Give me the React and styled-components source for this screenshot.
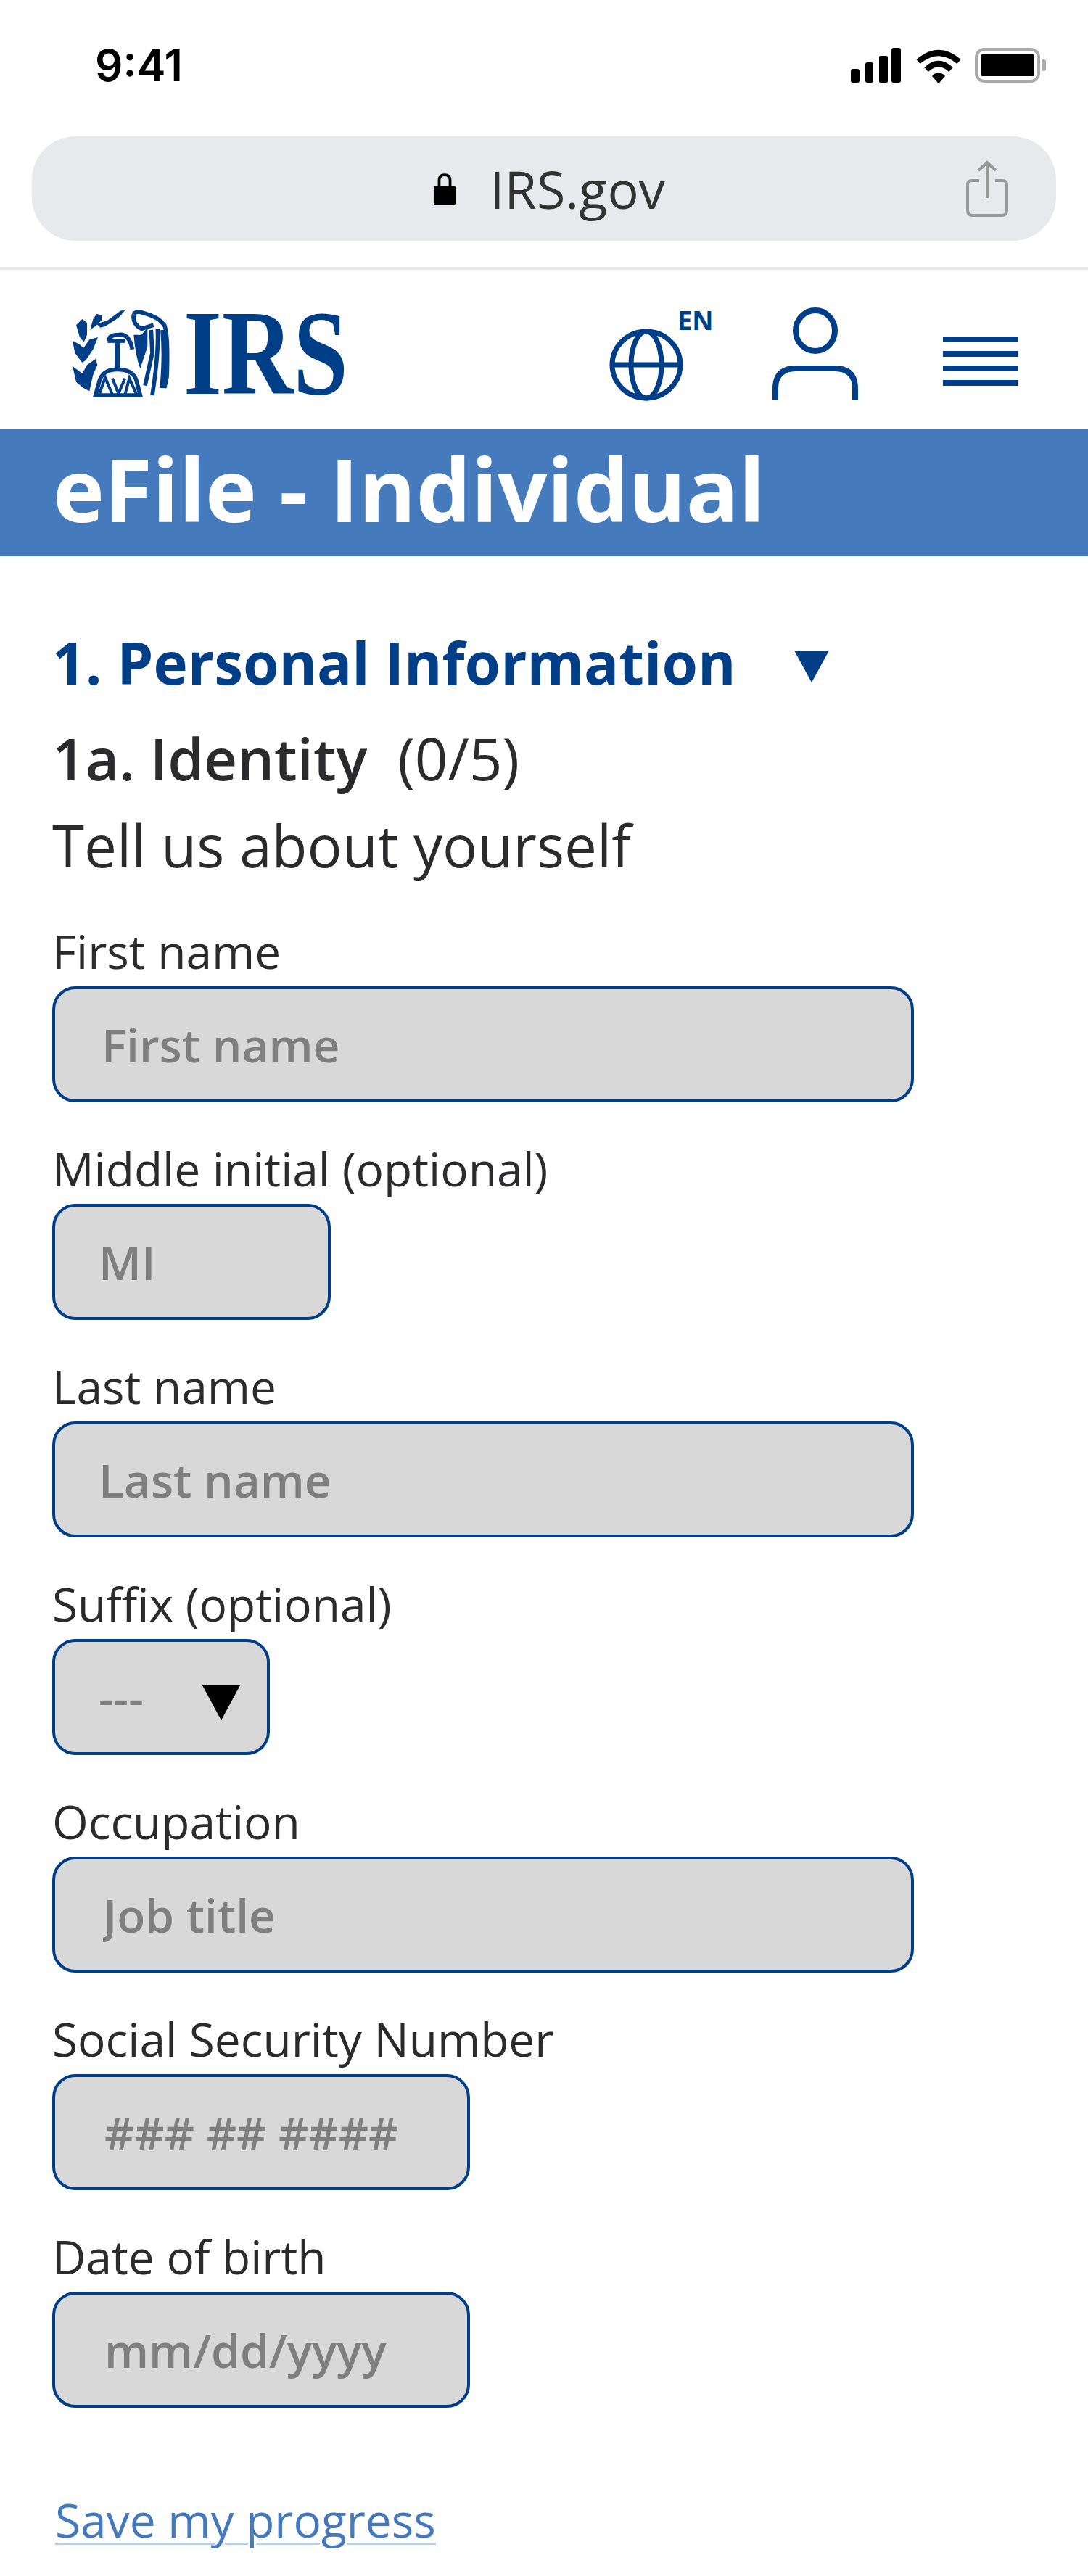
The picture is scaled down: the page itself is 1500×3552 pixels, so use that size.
import React from 'react'
import styled, { createGlobalStyle } from 'styled-components'

const NAVY = '#003f87'

const GlobalStyle = createGlobalStyle`
    html, body {
        margin: 0;
        padding: 0;
        background: #ffffff;
    }
    * {
        box-sizing: border-box;
    }
`

const Page = styled.div`
    width: 1500px;
    height: 3552px;
    overflow: hidden;
    font-family: "Open Sans", sans-serif;
    color: #2b2b2e;
`

const StatusBar = styled.div`
    height: 188px;
    display: flex;
    align-items: center;
    justify-content: space-between;
    padding: 0 57px 8px 131px;
`

const Time = styled.span`
    font-family: "Inter", sans-serif;
    font-weight: 600;
    font-size: 60px;
    color: #000000;
`

const StatusIcons = styled.div`
    display: flex;
    align-items: center;
    gap: 19px;
`

const UrlWrap = styled.div`
    padding: 0 44px 36px;
    border-bottom: 4px solid #e8e9ec;
`

const UrlBar = styled.div`
    height: 144px;
    border-radius: 60px;
    background: #e8e9ec;
    display: grid;
    grid-template-columns: 1fr auto 1fr;
    align-items: center;
    padding: 0 66px 0 80px;
`

const UrlText = styled.div`
    grid-column: 2;
    display: flex;
    align-items: center;
    gap: 46px;
    font-size: 72px;
    line-height: 100px;
    color: #333333;
`

const ShareIcon = styled.svg`
    justify-self: end;
    width: 58px;
    height: 78px;
`

const Header = styled.header`
    height: 220px;
    display: flex;
    align-items: flex-start;
    padding: 52px 96px 0 100px;
`

const Irs = styled.span`
    margin-left: 18px;
    margin-top: -33px;
    width: 224px;
    display: block;
    font-family: "Liberation Serif", serif;
    font-weight: 700;
    font-size: 168px;
    line-height: 190px;
    color: ${NAVY};
    transform: scaleX(0.81);
    transform-origin: left center;
`

const Actions = styled.div`
    margin-left: auto;
    display: flex;
    align-items: flex-start;
`

const GlobeWrap = styled.div`
    position: relative;
    width: 102px;
    height: 100px;
    margin-top: 29px;
`

const EnBadge = styled.span`
    position: absolute;
    left: 94px;
    top: -31px;
    font-size: 36px;
    line-height: 40px;
    font-weight: 700;
    color: ${NAVY};
`

const PersonIcon = styled.svg`
    width: 118px;
    height: 128px;
    margin-left: 123px;
`

const MenuButton = styled.div`
    width: 104px;
    margin-left: 117px;
    margin-top: 40px;
    display: flex;
    flex-direction: column;
    gap: 12px;
`

const MenuBar = styled.span`
    display: block;
    height: 8px;
    background: ${NAVY};
`

const Banner = styled.div`
    height: 175px;
    background: #457bbd;
    display: flex;
    align-items: center;
    padding: 0 0 12px 73px;
`

const BannerTitle = styled.h1`
    margin: 0;
    font-size: 120px;
    line-height: 150px;
    font-weight: 700;
    color: #ffffff;
`

const Main = styled.main`
    padding: 96px 0 0 72px;
`

const SectionTitle = styled.h2`
    margin: 0;
    display: flex;
    align-items: center;
    font-size: 80px;
    line-height: 100px;
    font-weight: 700;
    color: ${NAVY};
`

const Caret = styled.svg`
    width: 48px;
    height: 44px;
    margin-left: 80px;
    margin-top: 12px;
`

const SubTitle = styled.h3`
    margin: 32px 0 0;
    font-size: 80px;
    line-height: 100px;
    font-weight: 600;
`

const Count = styled.span`
    font-weight: 400;
    margin-left: 21px;
`

const Lead = styled.p`
    margin: 20px 0 0;
    font-size: 80px;
    line-height: 100px;
`

const Form = styled.form`
    margin-top: 57px;
    display: flex;
    flex-direction: column;
    gap: 52px;
`

const Field = styled.div`
    display: flex;
    flex-direction: column;
    gap: 8px;
`

const Label = styled.label`
    font-size: 64px;
    line-height: 80px;
`

const Input = styled.input`
    width: ${(p) => p.$width}px;
    height: 160px;
    padding: 0 0 0 ${(p) => p.$inset}px;
    border: 4px solid ${NAVY};
    border-radius: 32px;
    background: #d8d8d8;
    font-family: inherit;
    font-size: 64px;
    font-weight: 600;
    outline: none;
    &::placeholder {
        color: #7f7f7f;
        opacity: 1;
    }
`

const SelectBox = styled.div`
    position: relative;
    width: 300px;
`

const Select = styled.select`
    width: 100%;
    height: 160px;
    padding: 0 0 0 60px;
    border: 4px solid ${NAVY};
    border-radius: 32px;
    background: #d8d8d8;
    appearance: none;
    font-family: inherit;
    font-size: 64px;
    font-weight: 600;
    color: #7f7f7f;
    outline: none;
`

const SelectArrow = styled.svg`
    position: absolute;
    left: 207px;
    top: 64px;
    width: 52px;
    height: 48px;
`

const SaveLink = styled.a`
    display: inline-block;
    margin: 115px 0 0 4px;
    font-size: 64px;
    line-height: 80px;
    color: #4479bc;
    text-decoration: underline;
    text-decoration-thickness: 3px;
    text-decoration-color: #b9cde6;
    text-underline-offset: 7px;
`

const fields = [
    { label: 'First name', placeholder: 'First name', width: 1188, inset: 64 },
    { label: 'Middle initial (optional)', placeholder: 'MI', width: 384, inset: 60 },
    { label: 'Last name', placeholder: 'Last name', width: 1188, inset: 60 },
    { label: 'Suffix (optional)', select: true },
    { label: 'Occupation', placeholder: 'Job title', width: 1188, inset: 66 },
    { label: 'Social Security Number', placeholder: '### ## ####', width: 576, inset: 68 },
    { label: 'Date of birth', placeholder: 'mm/dd/yyyy', width: 576, inset: 68 },
]

function SignalIcon() {
    return (
        <svg width="72" height="48" viewBox="0 0 72 48" fill="#000">
            <rect x="1" y="29" width="12" height="19" rx="3" />
            <rect x="21" y="20" width="11" height="28" rx="3" />
            <rect x="40" y="11" width="12" height="37" rx="2" />
            <rect x="57" y="0" width="13" height="48" rx="3" />
        </svg>
    )
}

function WifiIcon() {
    return (
        <svg width="62" height="48" viewBox="0 0 62 48" fill="none" stroke="#000" strokeWidth="8">
            <path d="M3 19 Q31 -5 59 19" />
            <path d="M14 30 Q31 14 48 30" />
            <path d="M24 39 L31 47 L38 39 Q31 32 24 39 Z" fill="#000" strokeWidth="3" />
        </svg>
    )
}

function BatteryIcon() {
    return (
        <svg width="99" height="48" viewBox="0 0 99 48">
            <rect x="2" y="2" width="86" height="44" rx="11" fill="none" stroke="#aaaaaa" strokeWidth="4" />
            <rect x="8" y="9" width="74" height="30" rx="2" fill="#000" />
            <rect x="92" y="16" width="6" height="16" rx="3" fill="#aaaaaa" />
        </svg>
    )
}

function LockIcon() {
    return (
        <svg width="32" height="48" viewBox="0 0 34 48">
            <path d="M9 22 V12 Q9 4 17 4 Q25 4 25 12 V22" fill="none" stroke="#000" strokeWidth="4" />
            <rect x="1" y="20" width="32" height="28" rx="3" fill="#000" />
        </svg>
    )
}

function SealIcon() {
    return (
        <svg width="135" height="126" viewBox="15 12 405 378" fill={NAVY} stroke="none">
            <path d="M30 85 L55 60 L75 75 L75 125 L62 155 L45 135 Z" />
            <path d="M88 105 L100 60 L115 38 L135 45 L135 65 L115 85 Z" />
            <path d="M115 80 L160 65 L215 25 L232 25 L205 55 L150 90 L130 95 Z" />
            <path d="M15 150 L45 165 L60 180 L85 145 L120 135 L100 185 L70 230 L55 240 L25 200 Z" />
            <path d="M15 255 L35 270 L55 285 L75 250 L110 225 L118 250 L100 290 L85 358 L60 345 L30 320 Z" />
            <path d="M268 125 Q275 210 295 265 L325 175 L325 95 L300 125 Z" />
            <g fill="none" stroke={NAVY} strokeWidth="17">
                <path d="M165 150 Q165 125 205 125 Q250 118 262 185" />
                <path d="M160 150 H232" />
                <path d="M200 150 V265" strokeWidth="20" />
                <path d="M110 375 H295 L278 310 Q262 268 200 268 Q145 268 128 310 Z" />
                <path d="M125 372 L150 302 L180 372 M205 368 L180 305 M205 368 L232 305 M232 372 L250 305 L280 372" strokeWidth="12" />
                <path d="M268 40 Q275 25 310 35 Q370 50 395 85 Q412 130 405 300 L395 345" />
                <path d="M268 40 Q262 80 300 100 L350 85" />
                <path d="M340 105 L345 200 L315 335" />
                <path d="M367 100 Q372 200 345 375" />
                <path d="M387 105 Q397 220 384 345" />
            </g>
        </svg>
    )
}

function App() {
    return (
        <Page>
            <GlobalStyle />
            <StatusBar>
                <Time>9:41</Time>
                <StatusIcons>
                    <SignalIcon />
                    <WifiIcon />
                    <BatteryIcon />
                </StatusIcons>
            </StatusBar>
            <UrlWrap>
                <UrlBar>
                    <UrlText>
                        <LockIcon />
                        IRS.gov
                    </UrlText>
                    <ShareIcon viewBox="0 0 58 78" fill="none" stroke="#999999" strokeWidth="4">
                        <path d="M29 52 V3 M17 14 L29 3 L41 14" />
                        <path d="M18 28 H8 Q2 28 2 34 V69 Q2 76 9 76 H49 Q56 76 56 69 V34 Q56 28 50 28 H40" />
                    </ShareIcon>
                </UrlBar>
            </UrlWrap>
            <Header>
                <SealIcon />
                <Irs>IRS</Irs>
                <Actions>
                    <GlobeWrap>
                        <svg width="102" height="100" viewBox="0 0 102 100" fill="none" stroke={NAVY} strokeWidth="7">
                            <ellipse cx="51" cy="50" rx="47" ry="46" />
                            <ellipse cx="51" cy="50" rx="21" ry="46" />
                            <path d="M4 50 H98" />
                        </svg>
                        <EnBadge>EN</EnBadge>
                    </GlobeWrap>
                    <PersonIcon viewBox="0 0 118 128" fill="none" stroke={NAVY} strokeWidth="8">
                        <ellipse cx="59" cy="32" rx="27" ry="28" />
                        <path d="M4 128 V112 Q4 84 32 84 H86 Q114 84 114 112 V128" />
                    </PersonIcon>
                    <MenuButton>
                        <MenuBar />
                        <MenuBar />
                        <MenuBar />
                        <MenuBar />
                    </MenuButton>
                </Actions>
            </Header>
            <Banner>
                <BannerTitle>eFile - Individual</BannerTitle>
            </Banner>
            <Main>
                <SectionTitle>
                    1. Personal Information
                    <Caret viewBox="0 0 48 44" fill={NAVY}>
                        <path d="M0 0 H48 L24 44 Z" />
                    </Caret>
                </SectionTitle>
                <SubTitle>
                    1a. Identity <Count>(0/5)</Count>
                </SubTitle>
                <Lead>Tell us about yourself</Lead>
                <Form>
                    {fields.map((field) => (
                        <Field key={field.label}>
                            <Label>{field.label}</Label>
                            {field.select ? (
                                <SelectBox>
                                    <Select defaultValue="---">
                                        <option value="---">---</option>
                                    </Select>
                                    <SelectArrow viewBox="0 0 52 48" fill="#000">
                                        <path d="M0 0 H52 L26 48 Z" />
                                    </SelectArrow>
                                </SelectBox>
                            ) : (
                                <Input placeholder={field.placeholder} $width={field.width} $inset={field.inset} />
                            )}
                        </Field>
                    ))}
                </Form>
                <SaveLink href="#">Save my progress</SaveLink>
            </Main>
        </Page>
    )
}

export default App
